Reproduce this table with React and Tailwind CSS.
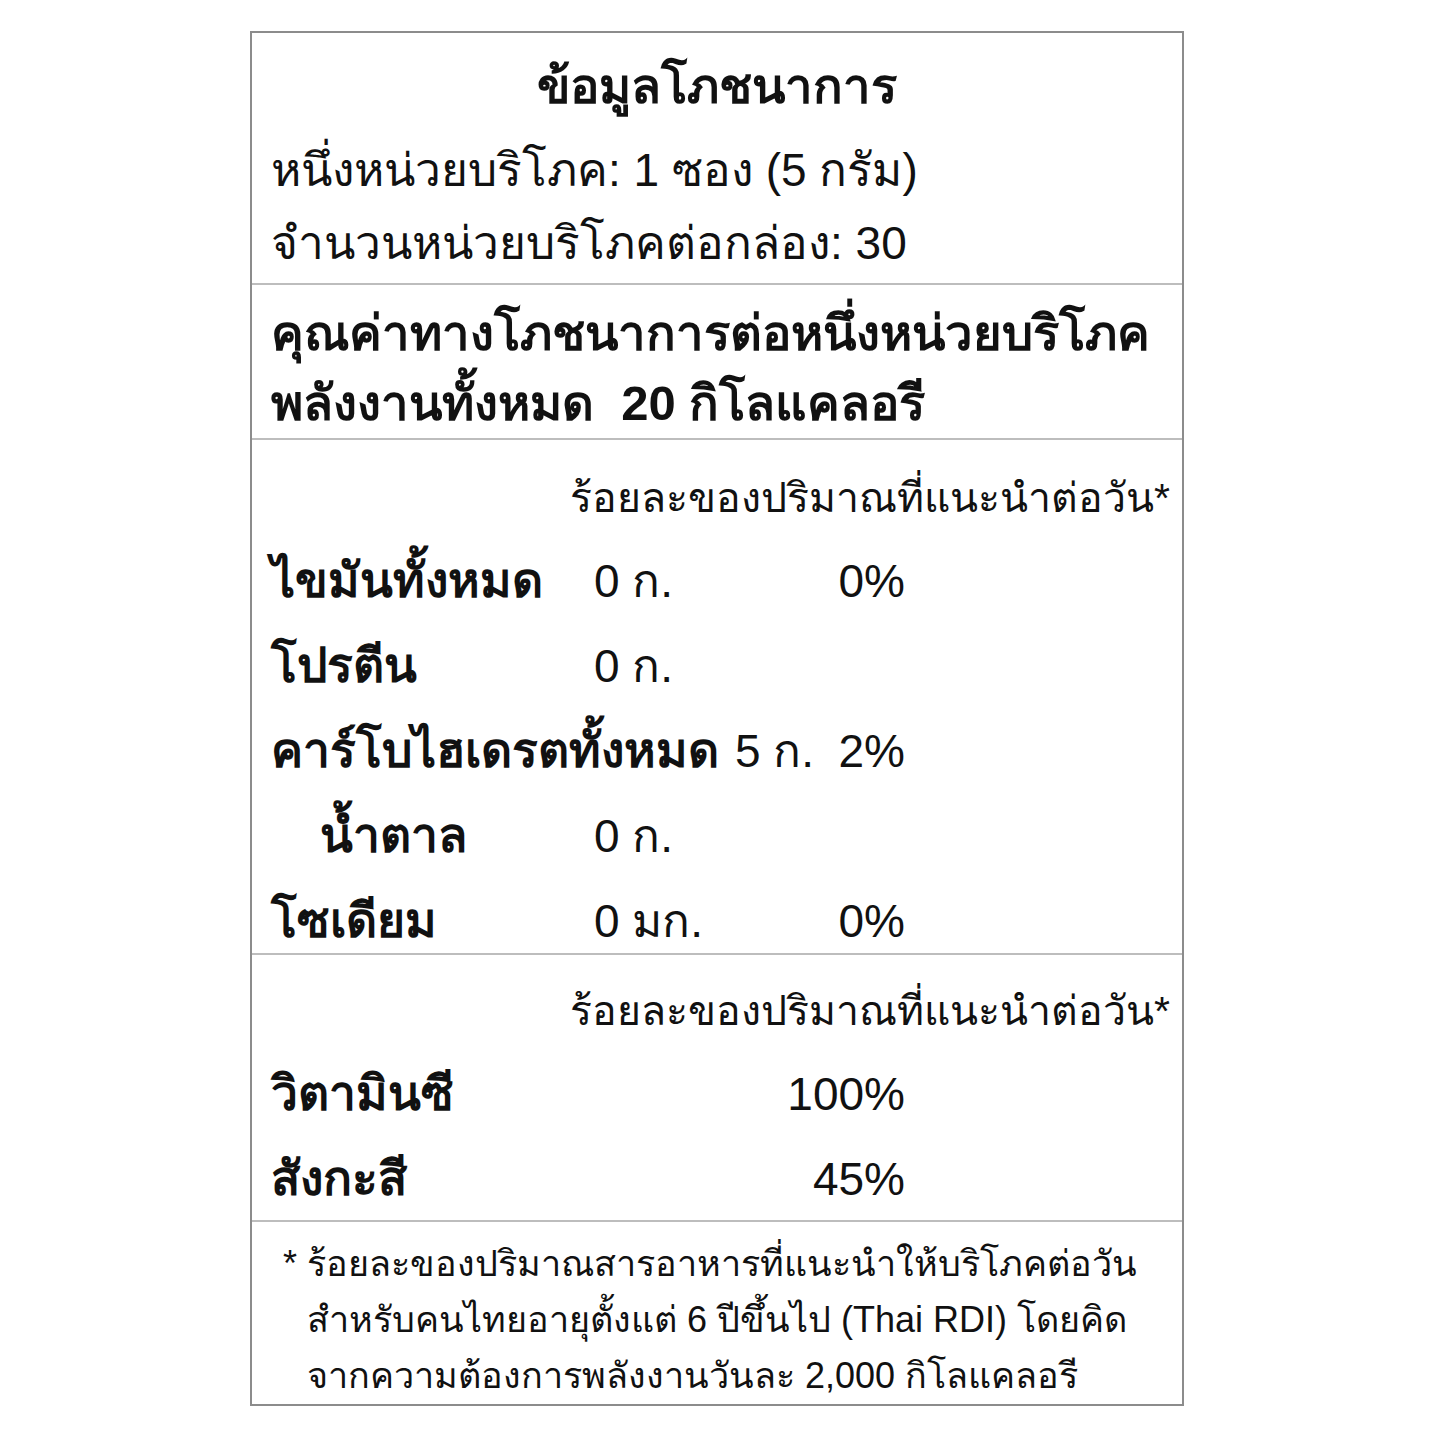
const rows = [
  { name: 'ไขมันทั้งหมด', amount: '0 ก.', pct: '0%' },
  { name: 'โปรตีน', amount: '0 ก.', pct: '' },
  { name: 'คาร์โบไฮเดรตทั้งหมด', amount: '5 ก.', pct: '2%' },
  { name: 'น้ำตาล', amount: '0 ก.', pct: '', indent: true },
  { name: 'โซเดียม', amount: '0 มก.', pct: '0%' },
];

const vitamins = [
  { name: 'วิตามินซี', pct: '100%' },
  { name: 'สังกะสี', pct: '45%' },
];

const NutrientRow = ({ name, amount, pct, indent }) => (
  <div className="flex items-center w-[634px] h-[85px] text-[46px]">
    <div className={`min-w-[323px] pr-[16px] font-bold text-[48px] ${indent ? 'pl-[49px]' : ''}`}>{name}</div>
    <div>{amount}</div>
    <div className="ml-auto text-right">{pct}</div>
  </div>
);

export default function App() {
  return (
    <div className="min-h-[1440px] w-[1440px] bg-white text-[#111] font-['Liberation_Sans',sans-serif]">
      <div className="pt-[31px] pl-[250px]">
        <div className="w-[934px] border-2 border-[#8c8c8c] leading-none">
          {/* header */}
          <div className="h-[250px] px-[19px] pt-[12px] text-[46px]">
            <div className="text-center font-bold text-[49px] leading-[82px]">ข้อมูลโภชนาการ</div>
            <div className="leading-[86px]">หนึ่งหน่วยบริโภค: 1 ซอง (5 กรัม)</div>
            <div className="leading-[60px]">จำนวนหน่วยบริโภคต่อกล่อง: 30</div>
          </div>
          <div className="border-t-2 border-[#bdbdbd] h-[155px] px-[19px] pt-[12px] font-bold text-[49px]">
            <div className="leading-[72px]">คุณค่าทางโภชนาการต่อหนึ่งหน่วยบริโภค</div>
            <div className="leading-[68px] whitespace-pre">พลังงานทั้งหมด  20 กิโลแคลอรี</div>
          </div>
          {/* nutrients */}
          <div className="border-t-2 border-[#bdbdbd] h-[515px] pl-[19px] pr-[12px] pt-[18px]">
            <div className="text-right text-[41px] leading-[80px]">ร้อยละของปริมาณที่แนะนำต่อวัน*</div>
            {rows.map((r) => (
              <NutrientRow key={r.name} {...r} />
            ))}
          </div>
          {/* vitamins */}
          <div className="border-t-2 border-[#bdbdbd] h-[267px] pl-[19px] pr-[12px] pt-[16px]">
            <div className="text-right text-[41px] leading-[80px]">ร้อยละของปริมาณที่แนะนำต่อวัน*</div>
            {vitamins.map((v) => (
              <NutrientRow key={v.name} name={v.name} amount="" pct={v.pct} />
            ))}
          </div>
          {/* footnote */}
          <div className="border-t-2 border-[#bdbdbd] h-[184px] pl-[31px] pr-[12px] pt-[14px] text-[36px] leading-[56px]">
            <div className="flex">
              <span className="w-[24px]">*</span>
              <div>
                <div>ร้อยละของปริมาณสารอาหารที่แนะนำให้บริโภคต่อวัน</div>
                <div>สำหรับคนไทยอายุตั้งแต่ 6 ปีขึ้นไป (Thai RDI) โดยคิด</div>
                <div>จากความต้องการพลังงานวันละ 2,000 กิโลแคลอรี</div>
              </div>
            </div>
          </div>
        </div>
      </div>
    </div>
  );
}
